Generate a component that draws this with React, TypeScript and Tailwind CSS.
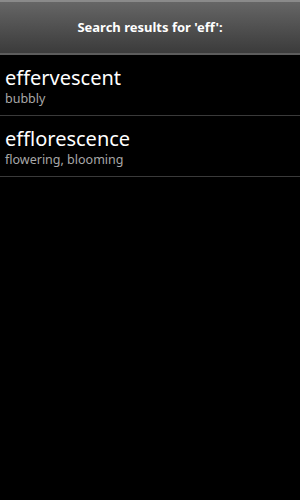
import React from "react";

const results = [
  { word: "effervescent", meaning: "bubbly" },
  { word: "efflorescence", meaning: "flowering, blooming" },
];

export default function App() {
  return (
    <div
      className="min-h-[500px] w-[300px] bg-black text-white"
      style={{ fontFamily: '"Noto Sans", "Open Sans", sans-serif' }}
    >
      <header className="flex h-[55px] flex-col">
        <div className="flex h-[53px] items-center justify-center border-t-2 border-[#8a8a8a] bg-gradient-to-b from-[#666666] to-[#3b3b3b]">
          <span className="text-[13px] font-bold text-white">Search results for 'eff':</span>
        </div>
        <div className="h-[2px] bg-[#5c5c5c]" />
      </header>
      <ul>
        {results.map((r) => (
          <li key={r.word} className="border-b border-[#3a3a3a] px-[5px] pt-[11px] pb-[7px]">
            <div className="text-[20px] leading-[24px] text-white">{r.word}</div>
            <div className="text-[12.5px] leading-[18px] text-[#a8a8a8]">{r.meaning}</div>
          </li>
        ))}
      </ul>
    </div>
  );
}
